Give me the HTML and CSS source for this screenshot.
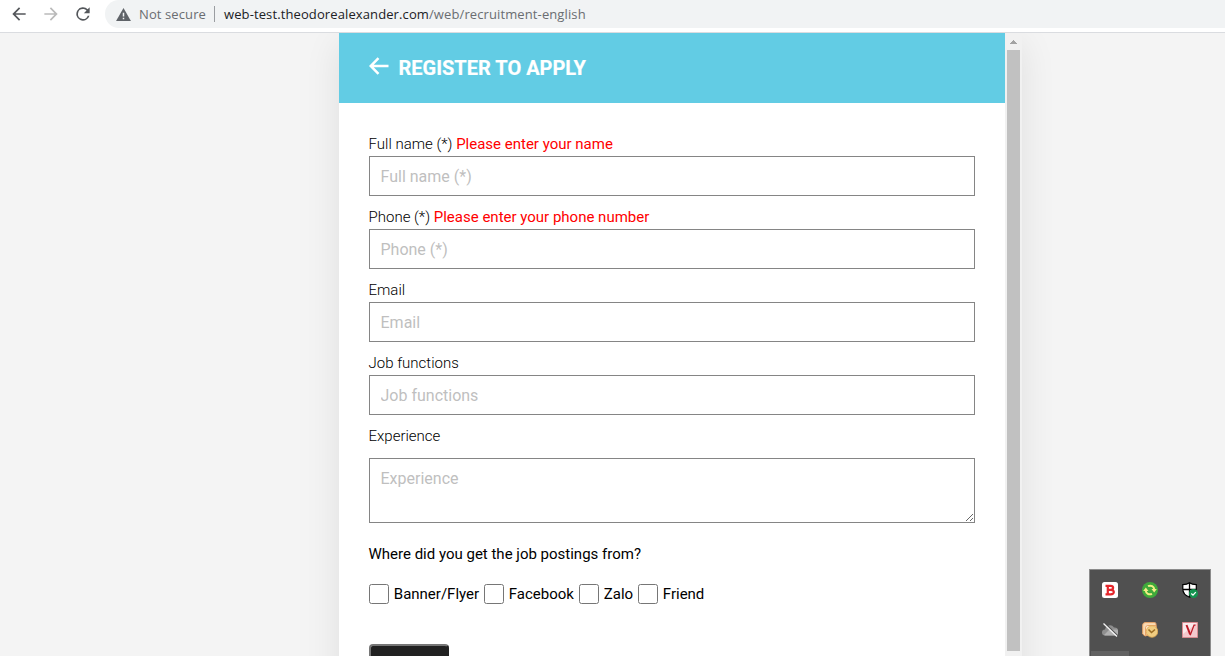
FILE: index.html
```html
<!DOCTYPE html>
<html lang="en">
<head>
<meta charset="utf-8">
<title>Register to apply</title>
<link rel="stylesheet" href="styles.css">
</head>
<body>
<div class="toolbar">
  <svg class="nav back" viewBox="0 0 24 24"><path d="M20 11H7.830l5.590-5.590L12 4l-8 8 8 8 1.410-1.410L7.830 13H20z"/></svg>
  <svg class="nav forward" viewBox="0 0 24 24"><path d="M4 13h12.170l-5.590 5.590L12 20l8-8-8-8-1.410 1.410L16.170 11H4z"/></svg>
  <svg class="nav reload" viewBox="0 0 24 24"><path d="M17.650 6.350A8 8 0 1 0 19.730 14h-2.080A6 6 0 1 1 12 6c1.660 0 3.140.69 4.220 1.780L13 11h7V4z"/></svg>
  <div class="omnibox">
    <svg class="warn" viewBox="0 0 16 14"><path fill="#5f6368" d="M8 0l8 14H0z"/><path fill="#f1f3f4" d="M7.200 5h1.600v4.200H7.200zM7.200 10.400h1.600V12H7.200z"/></svg>
    <span class="insecure">Not secure</span>
    <span class="divider"></span>
    <span class="url"><span class="host">web-test.theodorealexander.com</span>/web/recruitment-english</span>
  </div>
</div>
<main class="viewport">
  <div class="panel">
    <form class="form">
      <header class="head">
        <svg class="head-arrow" viewBox="0 0 20 18"><path d="M9.500 1.200L1.700 9l7.800 7.800M1.700 9H19.500"/></svg>
        <h1 class="title">REGISTER TO APPLY</h1>
      </header>
      <div class="fields">
        <div class="field"><label class="label">Full name (*) <span class="error">Please enter your name</span></label><input class="input" placeholder="Full name (*)"></div>
        <div class="field"><label class="label">Phone (*) <span class="error">Please enter your phone number</span></label><input class="input" placeholder="Phone (*)"></div>
        <div class="field"><label class="label">Email</label><input class="input" placeholder="Email"></div>
        <div class="field"><label class="label">Job functions</label><input class="input" placeholder="Job functions"></div>
        <div class="field"><label class="label">Experience</label><textarea class="input area" placeholder="Experience"></textarea></div>
        <p class="question">Where did you get the job postings from?</p>
        <div class="options">
          <label class="option banner"><span class="box"></span>Banner/Flyer</label>
          <label class="option facebook"><span class="box"></span>Facebook</label>
          <label class="option zalo"><span class="box"></span>Zalo</label>
          <label class="option"><span class="box"></span>Friend</label>
        </div>
        <div class="submit"></div>
      </div>
    </form>
    <div class="scrollbar">
      <svg class="scroll-up" viewBox="0 0 7 4" shape-rendering="crispEdges"><path fill="#a3a3a3" d="M3 0h1v1h1v1h1v1h1v1H0V3h1V2h1V1h1z"/></svg>
      <div class="thumb"></div>
    </div>
  </div>
</main>
<aside class="tray">
  <svg class="tray-icon" viewBox="0 0 16 16"><rect width="16" height="16" rx="2.500" fill="#fff"/><path fill="none" stroke="#e5262b" stroke-width="2.200" d="M3.500 3.800H8.500C12 3.800 12 7.800 8.500 7.800H5.800M8.500 7.800C12.900 7.800 12.900 12.400 8.700 12.400H3.500M5.800 3.800v8.600"/></svg>
  <svg class="tray-icon" viewBox="0 0 16 16"><circle cx="8" cy="8" r="8" fill="#3faa3b"/><path fill="none" stroke="#f3ee85" stroke-width="2" d="M6 4.200C9 2.800 12 4.500 12.300 7.500M10 11.800C7 13.200 4 11.500 3.700 8.500"/><path fill="#f3ee85" d="M9.500 7h5.300l-2.600 3.600zM6.500 9H1.200l2.600-3.600z"/></svg>
  <svg class="tray-icon" viewBox="0 0 16 16"><path fill="#fff" stroke="#000" stroke-width="1.200" d="M7.500.8C6 2 3.500 2.700.8 2.700V7c0 4 3 6.800 6.700 8.300C11.200 13.800 14.300 11 14.300 7V2.700C11.500 2.700 9 2 7.500.8z"/><path stroke="#000" stroke-width="1.300" d="M7.500 1v14M1 7.500h13"/><circle cx="11.500" cy="11.500" r="4.500" fill="#13944f"/><path fill="none" stroke="#fff" stroke-width="1.300" d="M9.300 11.500l1.700 1.600 2.800-3"/></svg>
  <svg class="tray-icon" viewBox="0 0 16 16"><path fill="#8e8e8e" d="M3 13.500a3 3 0 0 1 0-6 5 5 0 0 1 9-2A4 4 0 0 1 13 13.500z"/><path fill="#b0b0b0" d="M2 13l5-5 7-.5a3 3 0 0 1-1 6H3z"/><path stroke="#505050" stroke-width="1.200" d="M2.500 1l13 12.500"/><path stroke="#f5f5f5" stroke-width="1.300" d="M1.500 1.500l13.500 13"/></svg>
  <svg class="tray-icon" viewBox="0 0 16 16"><path fill="#f9dab4" stroke="#e8a468" d="M3 .6h9.500Q14 .6 14 2v9L3 14 .7 12V3Q.7 1 3 .6z"/><path fill="#fff0dc" stroke="#e8a468" d="M3.500 13V6q0-2.500 2.500-2.500h8V12z"/><circle cx="10" cy="9.500" r="5.800" fill="#f0cc80" stroke="#dca750" stroke-width=".8"/><path fill="none" stroke="#9c6c22" stroke-width="1.600" d="M6.500 7.500l3 3L13 7.500"/></svg>
  <svg class="tray-icon" viewBox="0 0 16 16"><path fill="#f5c9cd" stroke="#d98b91" d="M.5.5h15v15H.5z"/><path fill="#fff" opacity=".6" d="M1 1h14L1 12z"/><path fill="none" stroke="#bd1825" stroke-width="2" d="M4.500 3l3.700 9.500"/><path fill="none" stroke="#bd1825" stroke-width="1.200" d="M8.200 13.200L12 3.200H13.500"/></svg>
  <div class="tray-hover"></div>
</aside>
</body>
</html>
```
FILE: styles.css
```css
* { box-sizing: border-box; }
body { margin: 0; height: 656px; overflow: hidden; background: #f4f4f4; font-family: Roboto, sans-serif; color: #000; }
.toolbar { position: relative; z-index: 1; display: flex; height: 33px; padding-left: 9px; background: #fff; border-bottom: 1px solid #dadce0; }
.nav { width: 20px; height: 20px; margin-top: 4px; fill: #54575b; flex: none; }
.forward { margin-left: 12px; fill: #bababa; }
.reload { margin-left: 12px; }
.omnibox { flex: 1; display: flex; align-items: center; height: 28px; margin-left: 12px; padding-left: 11px; background: #f1f3f4; border-radius: 14px 0 0 14px; font: 13px/20px "Open Sans", sans-serif; color: #6a6d71; white-space: nowrap; letter-spacing: .11px; }
.warn { width: 15px; height: 13px; flex: none; }
.insecure { width: 75px; margin-left: 8px; }
.divider { width: 1px; height: 16px; background: #9a9da1; }
.url { margin-left: 9px; }
.host { color: #202124; }
.viewport { display: flex; padding-left: 339px; height: 623px; overflow: hidden; }
.panel { display: flex; flex: none; width: 683px; height: 700px; box-shadow: 0 10px 34px rgba(0,0,0,.09); }
.form { width: 666px; background: #fff; overflow: hidden; }
.head { display: flex; height: 70px; padding-left: 29.5px; background: #62cce4; color: #fff; }
.head-arrow { width: 20px; height: 18px; margin-top: 23.5px; fill: none; stroke: #fff; stroke-width: 2.5; }
.title { margin: 0 0 0 10px; font-size: 20px; line-height: 71px; font-weight: 700; -webkit-text-stroke: .2px #fff; }
.fields { padding: 30px; }
.field { margin-bottom: 10px; }
.label { display: block; height: 23px; margin-left: -.5px; font-size: 15px; line-height: 22px; font-weight: 300; }
.error { font-weight: 400; color: #f00; }
.input { display: block; width: 606px; height: 40px; padding: 0 10.500px; border: 1px solid #858585; border-radius: 0; background: #fff; font: 16px/20px Roboto, sans-serif; outline: 0; }
.input::placeholder { color: #bfbfbf; opacity: 1; }
.area { height: 65px; margin-top: 10px; padding-top: 10px; }
.question { margin: 20px 0 0 -.5px; font-size: 15px; line-height: 22px; }
.options { display: flex; height: 20px; margin-top: 19px; font-size: 15px; line-height: 20px; }
.option { display: flex; white-space: nowrap; }
.banner { width: 115px; }
.facebook { width: 95px; }
.zalo { width: 59px; }
.box { width: 20px; height: 20px; margin-right: 4.8px; border: 1px solid #767676; border-radius: 2.5px; flex: none; }
.submit { width: 80px; height: 40px; margin-top: 40px; background: #212121; border: 2px solid #767676; border-right-color: #212121; border-radius: 4px; }
.scrollbar { width: 17px; background: #f1f1f1; padding: 7px 2px 0; }
.scroll-up { display: block; width: 7px; height: 4px; margin: 0 0 6px 3px; }
.thumb { width: 13px; height: 601px; background: #c1c1c1; }
.tray { position: absolute; left: 1089px; top: 569px; width: 122px; height: 87px; display: grid; grid-template-columns: repeat(3, 40px); grid-template-rows: 40px 40px 6px; place-items: center; background: #505050; border: 1px solid #8c8c8c; border-bottom: 0; }
.tray-icon { width: 16px; height: 16px; }
.tray-hover { width: 38px; height: 5px; align-self: end; background: #626262; }
```
